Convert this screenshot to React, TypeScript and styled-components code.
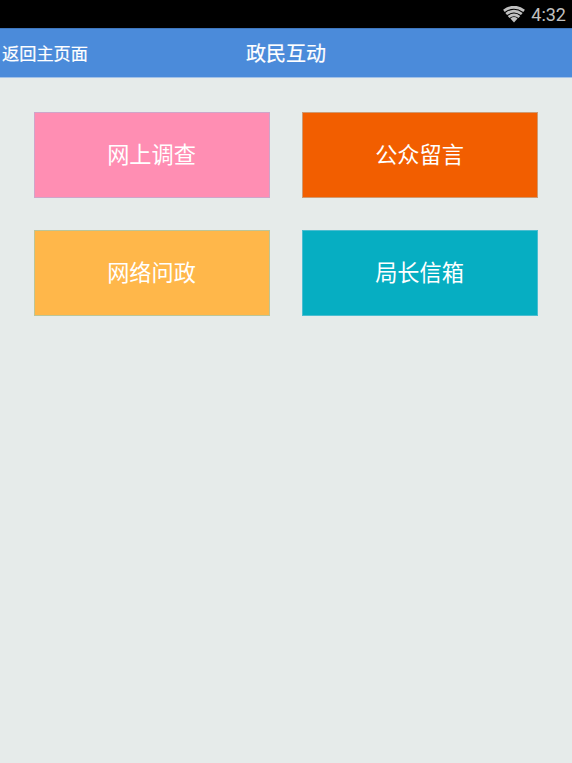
import React from 'react';
import styled, { createGlobalStyle } from 'styled-components';

const GlobalStyle = createGlobalStyle`
  body {
    margin: 0;
    background-color: #e6ebea;
    font-family: Roboto, 'Noto Sans CJK SC', sans-serif;
  }
`;

const Screen = styled.div`
  display: flex;
  flex-direction: column;
  height: 100vh;
  overflow: hidden;
`;

const StatusBar = styled.div`
  display: flex;
  align-items: center;
  justify-content: flex-end;
  gap: 6px;
  box-sizing: border-box;
  height: 28px;
  padding-right: 6px;
  background-color: #000;
  color: #c0c0c0;
`;

const Clock = styled.span`
  font-size: 18px;
  line-height: 28px;
  padding-top: 2px;
`;

const Header = styled.header`
  display: grid;
  grid-template-columns: 1fr auto 1fr;
  align-items: center;
  box-sizing: border-box;
  height: 50px;
  padding-top: 2px;
  border-top: 1px solid #3e76bd;
  border-bottom: 1px solid #a3c2e8;
  background-color: #4b8bda;
  color: #fff;
`;

const BackButton = styled.a`
  padding-left: 2px;
  font-size: 17.2px;
  line-height: 24px;
  -webkit-text-stroke: 0.2px #fff;
`;

const Title = styled.h1`
  margin: 0;
  font-size: 20px;
  font-weight: 400;
  line-height: 28px;
  -webkit-text-stroke: 0.2px #fff;
`;

const Menu = styled.main`
  display: grid;
  grid-template-columns: 236px 236px;
  grid-auto-rows: 86px;
  gap: 32px;
  padding: 34px;
`;

const MenuButton = styled.button<{ $color: string; $border: string }>`
  padding: 0 1px 0 0;
  border: 1px solid ${(props) => props.$border};
  background-color: ${(props) => props.$color};
  color: #fff;
  font-family: inherit;
  font-size: 22.2px;
  line-height: 32px;
`;

const items = [
  { label: '网上调查', color: '#ff8eb3', border: '#cfa5ca' },
  { label: '公众留言', color: '#f25e00', border: '#cf9a72' },
  { label: '网络问政', color: '#ffb74a', border: '#bcc598' },
  { label: '局长信箱', color: '#06aec2', border: '#4bbdd0' },
];

function WifiIcon() {
  return (
    <svg width="22" height="17" viewBox="0 0 22 17" fill="none">
      <path d="M11 16.5L7.4 12.4Q11 9.8 14.6 12.4Z" fill="currentColor" />
      <g stroke="currentColor" strokeWidth="2.8">
        <path d="M0.9 4.8Q11 -2.4 21.1 4.8" />
        <path d="M3.2 8Q11 2.2 18.8 8" />
        <path d="M5.6 11Q11 6.8 16.4 11" />
      </g>
    </svg>
  );
}

export default function App() {
  return (
    <Screen>
      <GlobalStyle />
      <StatusBar>
        <WifiIcon />
        <Clock>4:32</Clock>
      </StatusBar>
      <Header>
        <BackButton>返回主页面</BackButton>
        <Title>政民互动</Title>
      </Header>
      <Menu>
        {items.map((item) => (
          <MenuButton key={item.label} $color={item.color} $border={item.border}>
            {item.label}
          </MenuButton>
        ))}
      </Menu>
    </Screen>
  );
}
